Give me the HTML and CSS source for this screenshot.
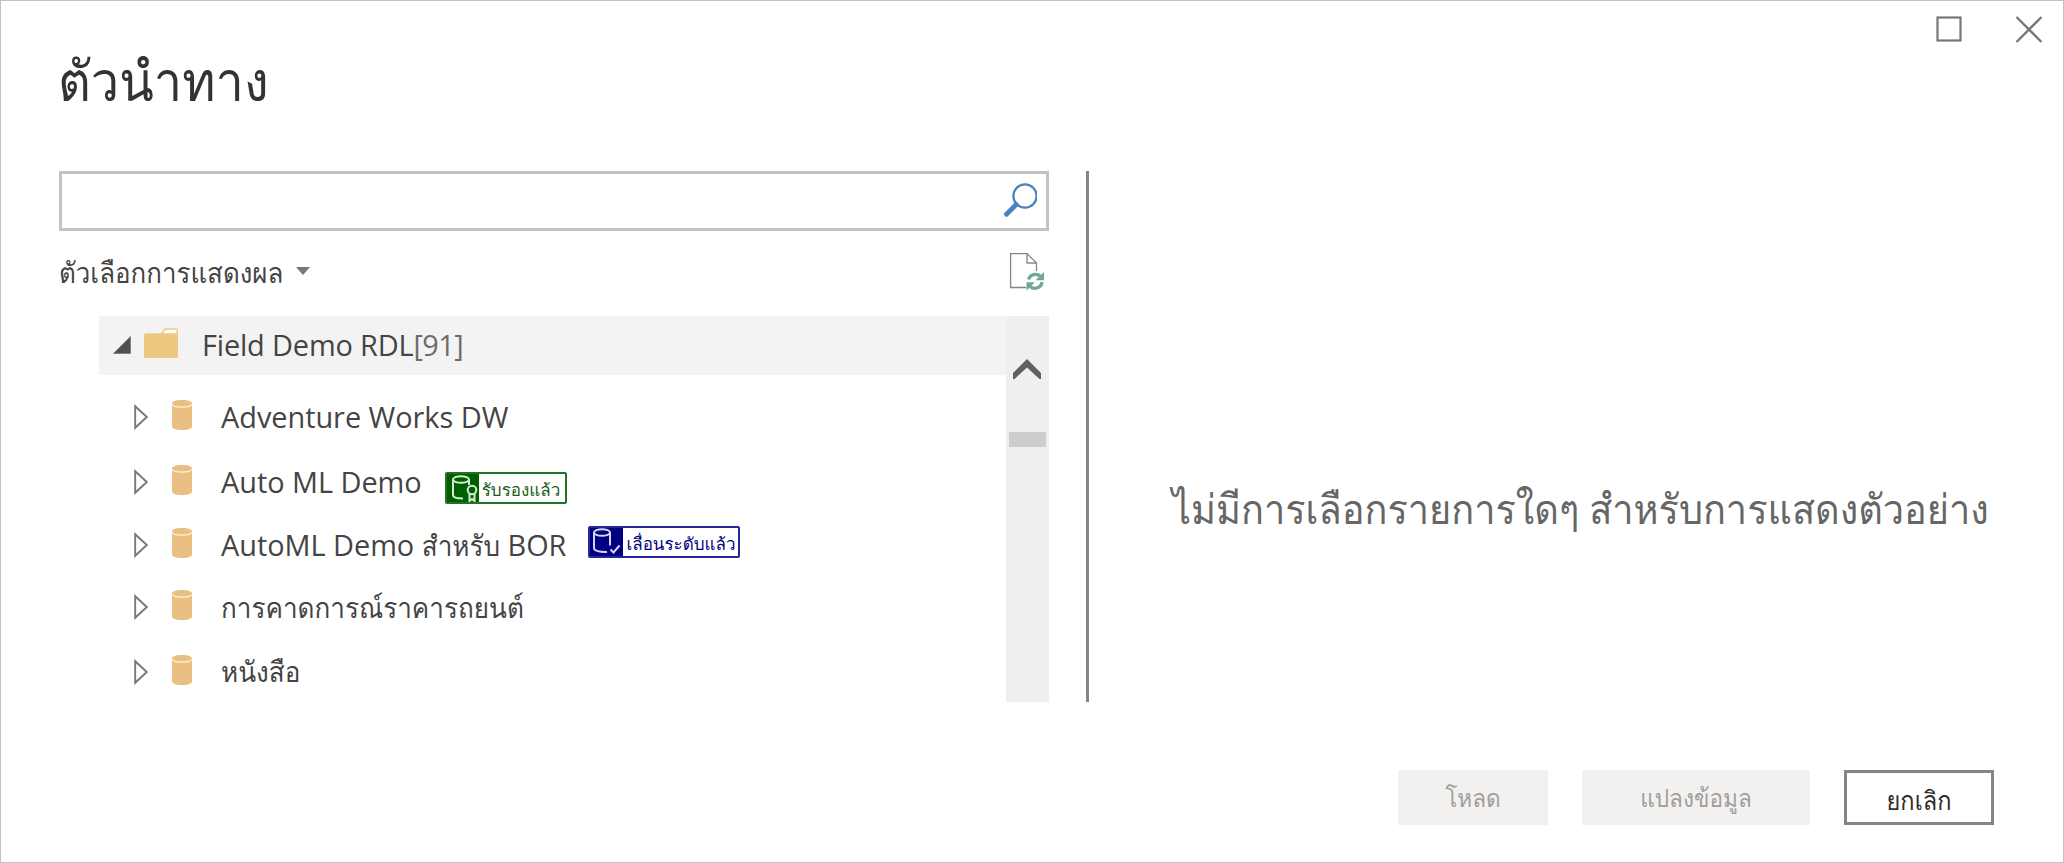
FILE: index.html
```html
<!DOCTYPE html>
<html lang="th">
<head>
<meta charset="utf-8">
<title>ตัวนำทาง</title>
<link rel="stylesheet" href="styles.css">
</head>
<body>
<svg width="0" height="0" class="defs">
  <symbol id="arrow" viewBox="0 0 16 26"><path d="M2.200 2.200V23.800L13.800 13Z" fill="#fff" stroke="#777" stroke-width="1.900"/></symbol>
  <symbol id="db" viewBox="0 0 20 30"><path d="M0 3.500C0-1.200 20-1.200 20 3.500V26.500C20 31.200 0 31.200 0 26.500Z" fill="#e9c081"/><path d="M.3 4.500C2 8 18 8 19.700 4.500" fill="none" stroke="#fff3df" stroke-width="1.300"/></symbol>
</svg>
<main class="dialog">
  <header class="header">
    <h1 class="title">ตัวนำทาง</h1>
    <div class="window-buttons">
      <svg width="26" height="26"><rect x="1.500" y="1.500" width="23" height="23" fill="none" stroke="#777" stroke-width="2.200"/></svg>
      <svg width="28" height="28"><path d="M1.500 1L26.500 26M26.500 1L1.500 26" stroke="#777" stroke-width="2.300"/></svg>
    </div>
  </header>
  <div class="content">
    <section class="navigator">
      <div class="search">
        <svg width="34" height="36"><circle cx="22" cy="15" r="11.600" fill="#fff" stroke="#4a83c0" stroke-width="2.300"/><path d="M13.200 23.500L3.500 33.200" stroke="#4a83c0" stroke-width="4.800" stroke-linecap="round"/></svg>
      </div>
      <div class="options">
        <span class="options-label">ตัวเลือกการแสดงผล</span>
        <svg class="caret" width="14" height="8"><path d="M0 0H14L7 8Z" fill="#777"/></svg>
        <svg class="refresh" width="36" height="40">
          <path d="M17 35.500H1.600V1.600H18L27.500 11V19" fill="none" stroke="#858585" stroke-width="1.300"/>
          <path d="M18 1.600V11H27.500" fill="none" stroke="#858585" stroke-width="1.300"/>
          <path d="M19.500 27.500A7.200 6.800 0 0 1 31.500 24.300M33 30A7.200 6.800 0 0 1 21 34.500" fill="none" stroke="#72a893" stroke-width="3.300"/>
          <path d="M35 20V28.300H26.500ZM17.500 38.500V30.300H26Z" fill="#72a893"/>
        </svg>
      </div>
      <div class="list">
        <div class="tree">
          <div class="folder-row">
            <svg class="expanded" width="20" height="20"><path d="M1.500 18.500H18.500V1.500Z" fill="#505050" stroke="#808080"/></svg>
            <svg class="folder" width="34" height="31"><path d="M17 6.500L21.500 1H32Q33.200 1 33.200 2V8H16Z" fill="#fff" stroke="#eec980" stroke-width="1.400"/><path d="M2 5.200H32.500L34 6V29Q34 30 33 30H1Q0 30 0 29V7Q0 5.200 2 5.200Z" fill="#eec880"/></svg>
            <span class="name">Field Demo RDL</span><span class="count">[91]</span>
          </div>
          <div class="row row-1"><svg class="arrow"><use href="#arrow"/></svg><svg class="db"><use href="#db"/></svg><span class="name">Adventure Works DW</span></div>
          <div class="row row-2"><svg class="arrow"><use href="#arrow"/></svg><svg class="db"><use href="#db"/></svg><span class="name">Auto ML Demo</span>
            <span class="badge certified">
              <svg class="badge-icon" width="32" height="30" fill="none" stroke="#d4edd2" stroke-width="2"><ellipse cx="14" cy="5.500" rx="8" ry="3.300"/><path d="M6 5.500V21Q6 24.500 16 24.500M22 5.500V11"/><circle cx="25" cy="16" r="4.300"/><path d="M22.500 20V27L25 25L27.500 27V20"/></svg>
              <span class="badge-text">รับรองแล้ว</span>
            </span>
          </div>
          <div class="row row-3"><svg class="arrow"><use href="#arrow"/></svg><svg class="db"><use href="#db"/></svg><span class="name">AutoML Demo <span class="th">สำหรับ</span> BOR</span>
            <span class="badge promoted">
              <svg class="badge-icon" width="33" height="30" fill="none" stroke="#d3d3f5" stroke-width="2"><ellipse cx="12" cy="4.500" rx="8" ry="3.300"/><path d="M4 4.500V20Q4 24 17 24M20 4.500V17.500"/><path d="M20.500 21.500L23.500 24.500L29.500 17.500"/></svg>
              <span class="badge-text">เลื่อนระดับแล้ว</span>
            </span>
          </div>
          <div class="row row-4"><svg class="arrow"><use href="#arrow"/></svg><svg class="db"><use href="#db"/></svg><span class="name th">การคาดการณ์ราคารถยนต์</span></div>
          <div class="row row-5"><svg class="arrow"><use href="#arrow"/></svg><svg class="db"><use href="#db"/></svg><span class="name th">หนังสือ</span></div>
        </div>
        <div class="scrollbar">
          <svg width="28" height="20"><path d="M0 14L14 0L28 14V20H26.500L14 8.500L1.500 20H0Z" fill="#606060"/></svg>
          <div class="thumb"></div>
        </div>
      </div>
    </section>
    <section class="preview"><p class="message">ไม่มีการเลือกรายการใดๆ สำหรับการแสดงตัวอย่าง</p></section>
  </div>
  <footer class="footer">
    <button class="button" disabled><span>โหลด</span></button>
    <button class="button wide" disabled><span>แปลงข้อมูล</span></button>
    <button class="button cancel"><span>ยกเลิก</span></button>
  </footer>
</main>
</body>
</html>
```
FILE: styles.css
```css
* { box-sizing: border-box; }
body { margin: 0; font-family: "Open Sans", Loma, "Noto Sans", sans-serif; color: #444; background: #fff; }
svg { display: block; flex: none; }
.defs { position: absolute; }
.dialog { width: 2064px; height: 863px; border: 1px solid #c3c3c3; padding: 0 20px 0 58px; display: flex; flex-direction: column; overflow: hidden; }
.header { height: 170px; display: flex; justify-content: space-between; align-items: flex-start; }
.title { margin: 46px 0 0 -1px; font-size: 50.600px; line-height: 70px; font-weight: 400; color: #333; }
/* Thai letters are drawn slightly taller than the font's own shapes */
.title, .options-label, .th, .message, .button span { transform: scaleY(1.1); transform-origin: 0 78%; }
.window-buttons { display: flex; gap: 53px; padding-top: 15px; }
.content { display: flex; height: 531px; }
.navigator { width: 990px; }
.search { height: 60px; border: 3px solid #c3c3c3; display: flex; justify-content: flex-end; padding: 7px 9px 0 0; }
.options { height: 85px; display: flex; align-items: flex-start; }
.options-label { font-size: 25.900px; line-height: 40px; margin-top: 22px; width: 237px; white-space: nowrap; }
.caret { margin-top: 36px; }
.refresh { margin: 21px 4px 0 auto; }
.list { display: flex; height: 386px; padding-left: 40px; }
.tree { flex: 1; }
.scrollbar { width: 43px; background: #efefef; display: flex; flex-direction: column; align-items: center; padding-top: 43px; }
.scrollbar svg { margin-right: 1px; }
.thumb { width: 37px; height: 15px; margin-top: 53px; background: #cdcdcd; }
.folder-row { height: 59px; background: #f3f3f3; display: flex; padding-left: 13px; font-size: 28.900px; line-height: 40px; }
.expanded { margin: 19px 12px 0 0; }
.folder { margin: 12px 24px 0 0; }
.folder-row .name, .folder-row .count { margin-top: 9px; }
.folder-row .name { letter-spacing: -.15px; }
.count { color: #6c6c6c; letter-spacing: -.6px; }
.row { display: flex; align-items: flex-start; padding: 25px 0 0 34px; height: 65px; }
.row-2 { height: 63px; }
.row-3 { height: 62px; }
.arrow { width: 16px; height: 26px; margin: 4px 23px 0 0; }
.db { width: 20px; height: 30px; margin-right: 29px; }
.row .name { font-size: 28.900px; line-height: 40px; margin-top: -3px; white-space: nowrap; letter-spacing: -.03px; }
.name .th, .row .name.th { font-size: 26.100px; letter-spacing: 0; }
.name .th { display: inline-block; }
.row-4 .name.th { margin-top: -2px; }
.badge { display: flex; height: 32px; border: 2px solid #217421; border-radius: 2px; color: #205c20; overflow: hidden; }
.certified { width: 122px; margin: 7px 0 0 23px; }
.promoted { width: 152px; margin: -2px 0 0 22px; border-color: #26269a; color: #000080; }
.badge-icon { background: #006000; }
.promoted .badge-icon { background: #000080; }
.badge-text { font-size: 17px; line-height: 31px; margin-left: 3px; white-space: nowrap; }
.preview { margin-left: 37px; border-left: 3px solid #858585; flex: 1; }
.message { margin: 308px 0 0 83px; font-size: 37.900px; line-height: 60px; color: #666; white-space: nowrap; }
.footer { display: flex; justify-content: flex-end; gap: 34px; padding: 68px 49px 0 0; }
.button { width: 150px; height: 55px; border: 0; background: #f3f1ef; color: #a09e9c; font: 22.600px/50px Loma, "Open Sans", sans-serif; padding: 5px 0 0; }
.button span { display: inline-block; }
.wide { width: 228px; }
.cancel { background: #fff; border: 3px solid #858585; color: #2f2d2b; font-size: 23.600px; }
```
